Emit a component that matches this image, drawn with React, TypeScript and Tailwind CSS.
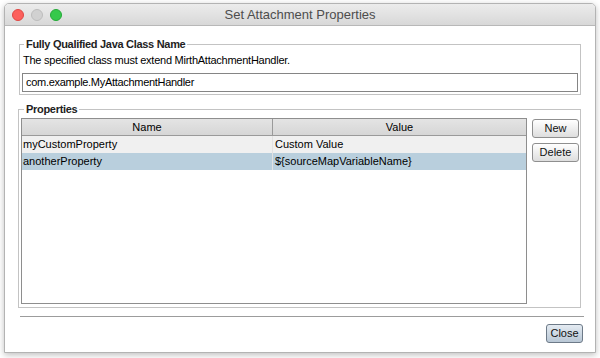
import React from 'react';

const rows = [
  { name: 'myCustomProperty', value: 'Custom Value', selected: false },
  { name: 'anotherProperty', value: '${sourceMapVariableName}', selected: true },
];

function TrafficLights() {
  return (
    <div className="flex items-center gap-[7px] pl-[7px]">
      <span className="w-[12px] h-[12px] rounded-full bg-[#fc605c] border border-[#df4744]" />
      <span className="w-[12px] h-[12px] rounded-full bg-[#d1d1d1] border border-[#bdbdbd]" />
      <span className="w-[12px] h-[12px] rounded-full bg-[#35c94b] border border-[#24a937]" />
    </div>
  );
}

function AquaButton({ label, primary }: { label: string; primary?: boolean }) {
  return (
    <button
      className={`h-[19px] rounded-[3px] border text-[11px] leading-none text-[#111] ${
        primary
          ? 'bg-gradient-to-b from-[#e4ebf2] to-[#b9c7d5] border-[#6d7a88]'
          : 'bg-gradient-to-b from-[#ffffff] to-[#dedede] border-[#8f8f8f]'
      }`}
    >
      {label}
    </button>
  );
}

export default function App() {
  return (
    <div
      className="w-[600px] h-[358px] bg-white pl-[4px] pt-[3px] overflow-hidden"
      style={{ fontFamily: '"Liberation Sans", Arial, sans-serif' }}
    >
      {/* Dialog window */}
      <div className="w-[592px] h-[350px] flex flex-col border border-[#b3b3b3] rounded-t-[5px] bg-white shadow-[0_2px_6px_rgba(0,0,0,0.25)] overflow-hidden">
        {/* Title bar */}
        <div className="relative h-[22px] shrink-0 flex items-center bg-gradient-to-b from-[#ececec] to-[#d8d8d8] border-b border-[#b8b8b8]">
          <TrafficLights />
          <div className="absolute inset-0 flex items-center justify-center text-[13px] text-[#4d4d4d]">
            Set Attachment Properties
          </div>
        </div>

        {/* Content */}
        <div className="flex-1 flex flex-col px-[14px] text-[11px] text-black">
          <fieldset className="mt-[12px] border border-[#c3c3c3] px-[2px] pb-[2px]">
            <legend className="ml-[2px] px-[2px] font-bold text-[11px] leading-[13px] tracking-[-0.3px] text-[#222]">
              Fully Qualified Java Class Name
            </legend>
            <div className="leading-[13px] mt-[3px] pl-[1px] tracking-[-0.25px]">
              The specified class must extend MirthAttachmentHandler.
            </div>
            <div className="mt-[6px] h-[19px] border border-[#858585] bg-white flex items-center px-[3px] tracking-[-0.3px]">
              com.example.MyAttachmentHandler
            </div>
          </fieldset>

          <fieldset className="mt-[8px] -ml-[1px] border border-[#c3c3c3] pl-[2px] pr-[1px] pb-[3px] h-[205px]">
            <legend className="ml-[3px] px-[2px] font-bold text-[11px] leading-[13px] tracking-[-0.3px] text-[#222]">
              Properties
            </legend>
            <div className="flex h-full gap-[5px] pt-[2px]">
              {/* Table */}
              <div className="w-[506px] h-[186px] border border-[#8e8e8e] bg-white">
                <div className="flex h-[17px] bg-gradient-to-b from-[#e4e4e4] to-[#d6d6d6] border-b border-[#9a9a9a]">
                  <div className="w-[251px] border-r border-[#9a9a9a] flex items-center justify-center">Name</div>
                  <div className="flex-1 flex items-center justify-center">Value</div>
                </div>
                {rows.map((r) => (
                  <div
                    key={r.name}
                    className={`flex h-[17px] items-center ${r.selected ? 'bg-[#b9cfdd]' : 'bg-[#f0f0f0]'}`}
                  >
                    <div className="w-[251px] pl-[1px] border-r border-[#e2e2e2]">{r.name}</div>
                    <div className="flex-1 pl-[2px]">{r.value}</div>
                  </div>
                ))}
              </div>

              {/* Side buttons */}
              <div className="w-[47px] flex flex-col gap-[5px] pt-[1px]">
                <AquaButton label="New" />
                <AquaButton label="Delete" />
              </div>
            </div>
          </fieldset>

          <div className="mt-[8px] ml-[1px] mr-[-3px] border-t border-[#9c9c9c]" />

          <div className="flex justify-end mt-[7px] mr-[-2px]">
            <div className="w-[37px] flex flex-col">
              <AquaButton label="Close" primary />
            </div>
          </div>
        </div>
      </div>
    </div>
  );
}
